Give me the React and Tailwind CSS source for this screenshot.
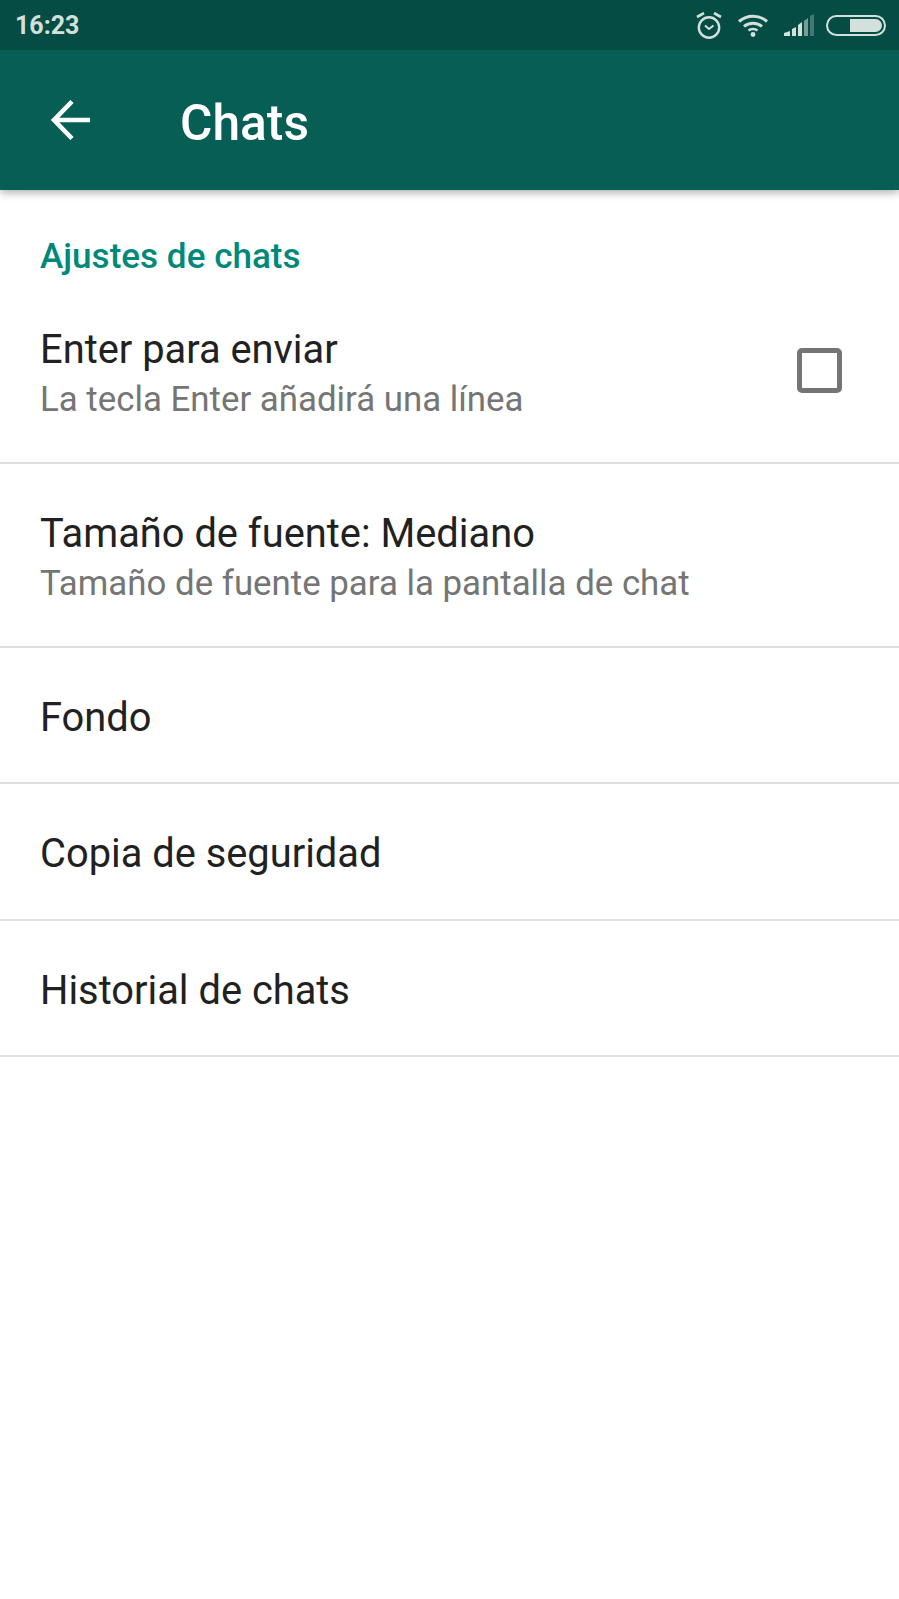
import React from "react";

const Row = ({ title, subtitle, checkbox, height = "h-[134px]" }) => (
  <div className="border-b-2 border-[#e0e0e0]">
    <div className={`flex items-center justify-between pl-[40px] pr-[57px] ${subtitle ? "h-[182px] pt-[8px]" : `${height} pt-[4px]`}`}>
      <div>
        <div className="text-[39.85px] leading-[49px] text-[#212121]">{title}</div>
        {subtitle && <div className="text-[34.85px] leading-[52px] text-[#757575]">{subtitle}</div>}
      </div>
      {checkbox && <div className="w-[45px] h-[45px] -mt-[9px] rounded-[5px] border-[5px] border-[#757575]" />}
    </div>
  </div>
);

const StatusIcons = () => (
  <div className="flex items-center text-[#d3e0dc]">
    <svg width="27" height="27" viewBox="0 0 27 27" fill="none" stroke="currentColor" strokeWidth="2.4" className="mr-[14px]">
      <circle cx="13" cy="15.5" r="10.2" />
      <path d="M9 13.5l4 3.5 4.5-3.5" strokeWidth="2" />
      <path d="M1 5l7-4M25 5l-7-4" strokeWidth="2.6" />
    </svg>
    <svg width="32" height="24" viewBox="0 0 32 24" fill="none" stroke="currentColor" strokeWidth="3" className="mr-[14px]">
      <path d="M2 8.5C10 1.5 22 1.5 30 8.5" />
      <path d="M7 13.5C12 9 20 9 25 13.5" />
      <path d="M11.5 17.5C14 15.5 18 15.5 20.5 17.5" strokeWidth="2.4" />
      <circle cx="16" cy="21.5" r="2.4" fill="currentColor" stroke="none" />
    </svg>
    <svg width="32" height="24" viewBox="0 0 32 24" className="mr-[11px]">
      <path d="M1 23v-3l6-2v5z" fill="currentColor" />
      <path d="M9 23v-7l4-2v9z" fill="currentColor" />
      <path d="M15 23V12l4-3v14z" fill="currentColor" />
      <path d="M21 23V8l4-3v18z" fill="currentColor" opacity="0.55" />
      <path d="M27 23V3l4-2v22z" fill="currentColor" opacity="0.3" />
    </svg>
    <div className="w-[60px] h-[21px] rounded-full border-2 border-[#d3e0dc] p-[2px] flex justify-end">
      <div className="w-[32px] h-full rounded-r-full bg-[#d3e0dc]" />
    </div>
  </div>
);

export default function App() {
  return (
    <div className="w-[899px] h-[1599px] bg-white overflow-hidden font-['Roboto',sans-serif]">
      <div className="relative shadow-[0_3px_8px_rgba(0,0,0,0.3)]">
        <div className="h-[50px] bg-[#054d44] flex items-center justify-between pl-[15px] pr-[13px]">
          <span className="text-[25px] font-bold pt-[2px] text-[#d3e0dc]">16:23</span>
          <StatusIcons />
        </div>
        <div className="h-[140px] bg-[#075e54] flex items-center">
          <svg width="44" height="44" viewBox="0 0 44 44" fill="none" stroke="white" strokeWidth="4.6" className="ml-[49px] mr-[87px]">
            <path d="M6 22H41" />
            <path d="M23 3.5L5 22l18 18.5" />
          </svg>
          <h1 className="text-[49.7px] leading-[50px] pt-[6px] font-medium text-white">Chats</h1>
        </div>
      </div>
      <div className="pl-[40px] pt-[44px] h-[90px] text-[35.1px] leading-[44px] font-medium text-[#00897b]">Ajustes de chats</div>
      <Row title="Enter para enviar" subtitle="La tecla Enter añadirá una línea" checkbox />
      <Row title="Tamaño de fuente: Mediano" subtitle="Tamaño de fuente para la pantalla de chat" />
      <Row title="Fondo" />
      <Row title="Copia de seguridad" height="h-[135px]" />
      <Row title="Historial de chats" />
    </div>
  );
}
